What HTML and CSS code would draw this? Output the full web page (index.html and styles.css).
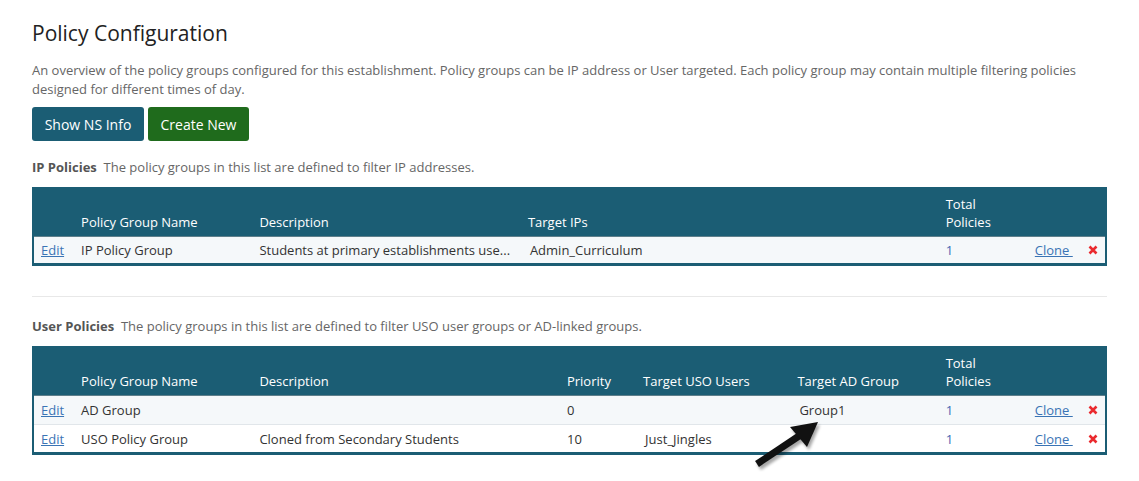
FILE: index.html
```html
<!DOCTYPE html>
<html>
<head>
<meta charset="utf-8">
<link rel="stylesheet" href="styles.css">
</head>
<body>
<div class="page">
  <h1 class="title">Policy Configuration</h1>
  <p class="intro">An overview of the policy groups configured for this establishment. Policy groups can be IP address or User targeted. Each policy group may contain multiple filtering policies designed for different times of day.</p>
  <div class="actions">
    <button class="btn btn-info">Show NS Info</button>
    <button class="btn btn-create">Create New</button>
  </div>

  <p class="section-label"><b>IP Policies</b>&nbsp; The policy groups in this list are defined to filter IP addresses.</p>
  <table class="grid grid-ip">
    <colgroup>
      <col style="width:41px"><col style="width:178px"><col style="width:268px"><col style="width:417px"><col style="width:89px"><col style="width:57px"><col style="width:21px">
    </colgroup>
    <thead>
      <tr><th></th><th>Policy Group Name</th><th>Description</th><th>Target IPs</th><th>Total<br>Policies</th><th></th><th></th></tr>
    </thead>
    <tbody>
      <tr><td><a href="#" class="link">Edit</a></td><td>IP Policy Group</td><td>Students at primary establishments use...</td><td class="shift">Admin_Curriculum</td><td class="count">1</td><td><a href="#" class="link">Clone&nbsp;</a></td><td class="del"><svg class="x" width="10" height="10" viewBox="0 0 10 10"><path d="M1.5 1.5L8.5 8.5M8.5 1.5L1.5 8.5"/></svg></td></tr>
    </tbody>
  </table>

  <hr class="sep">

  <p class="section-label"><b>User Policies</b>&nbsp; The policy groups in this list are defined to filter USO user groups or AD-linked groups.</p>
  <div class="user-wrap">
  <table class="grid">
    <colgroup>
      <col style="width:41px"><col style="width:178px"><col style="width:307px"><col style="width:76px"><col style="width:154px"><col style="width:148px"><col style="width:89px"><col style="width:57px"><col style="width:21px">
    </colgroup>
    <thead>
      <tr><th></th><th>Policy Group Name</th><th>Description</th><th>Priority</th><th>Target USO Users</th><th>Target AD Group</th><th>Total<br>Policies</th><th></th><th></th></tr>
    </thead>
    <tbody>
      <tr><td><a href="#" class="link">Edit</a></td><td>AD Group</td><td></td><td>0</td><td></td><td class="shift">Group1</td><td class="count">1</td><td><a href="#" class="link">Clone&nbsp;</a></td><td class="del"><svg class="x" width="10" height="10" viewBox="0 0 10 10"><path d="M1.5 1.5L8.5 8.5M8.5 1.5L1.5 8.5"/></svg></td></tr>
      <tr class="alt"><td><a href="#" class="link">Edit</a></td><td>USO Policy Group</td><td>Cloned from Secondary Students</td><td>10</td><td class="shift">Just_Jingles</td><td></td><td class="count">1</td><td><a href="#" class="link">Clone&nbsp;</a></td><td class="del"><svg class="x" width="10" height="10" viewBox="0 0 10 10"><path d="M1.5 1.5L8.5 8.5M8.5 1.5L1.5 8.5"/></svg></td></tr>
    </tbody>
  </table>
  <svg class="arrow" width="90" height="70" viewBox="0 0 90 70">
    <defs>
      <filter id="sh" x="-30%" y="-30%" width="160%" height="160%">
        <feGaussianBlur stdDeviation="1.6"/>
      </filter>
    </defs>
    <g transform="translate(2,3)" opacity="0.35" filter="url(#sh)">
      <line x1="7" y1="50" x2="52" y2="20" stroke="#000" stroke-width="7"/>
      <polygon points="68,8 40,13 57,33" fill="#000"/>
    </g>
    <line x1="7" y1="50" x2="52" y2="20" stroke="#111" stroke-width="7"/>
    <polygon points="68,8 40,13 57,33" fill="#111"/>
  </svg>
  </div>
</div>
</body>
</html>
```

FILE: styles.css
```css
* { box-sizing: border-box; }
html, body { margin: 0; padding: 0; background: #fff; }
body {
  font-family: "Open Sans", "Liberation Sans", sans-serif;
  font-size: 13px;
  color: #333;
  min-height: 481px;
}
.page {
  padding: 18px 32px 40px 32px;
}
.title {
  font-size: 21px;
  font-weight: 400;
  color: #222;
  margin: 0 0 13px 0;
  line-height: 30px;
}
.intro {
  margin: 0 0 8px 0;
  line-height: 19px;
  color: #666;
  font-size: 13px;
}
.actions {
  display: flex;
  gap: 4px;
  margin-bottom: 17px;
}
.btn {
  font-family: inherit;
  font-size: 14px;
  color: #fff;
  border: none;
  border-radius: 3px;
  height: 34px;
  padding: 0 12px;
  cursor: pointer;
}
.btn-info { background: #1b5d74; width: 112px; }
.btn-create { background: #1f6b1c; width: 101px; }
.section-label {
  margin: 0 0 11px 0;
  line-height: 18px;
  color: #666;
  font-size: 13px;
}
.section-label b { color: #555; font-weight: 700; }
.grid {
  width: 1075px;
  table-layout: fixed;
  border-collapse: collapse;
  border: 2px solid #1b5d74;
  border-bottom-width: 3px;
}
.grid th {
  background: #1b5d74;
  color: #fff;
  font-weight: 400;
  text-align: left;
  vertical-align: bottom;
  padding: 6px 7px 5px 7px;
  line-height: 18px;
  border-bottom: 1px solid #5e7f8b;
}
.grid td {
  padding: 0 7px;
  height: 29px;
  line-height: 18px;
  background: #f5f8fa;
  border-top: 1px solid #e1e6ea;
  white-space: nowrap;
  overflow: hidden;
}
.grid-ip td { height: 28px; }
.grid thead + tbody tr:first-child td { border-top: none; }
.grid tr.alt td { background: #fff; }
.grid td.shift { padding-left: 9px; }
.link { color: #3a74b5; text-decoration: underline; }
.count { color: #4468b4; }
.grid td.del { padding: 0 0 0 3px; }
.x { display: block; stroke: #ea2a2e; stroke-width: 2.6; fill: none; }
.sep {
  border: none;
  border-top: 1px solid #e8e8e8;
  margin: 30px 0 20px 0;
}
.user-wrap { position: relative; }
.arrow {
  position: absolute;
  left: 718px;
  top: 68px;
}
```
